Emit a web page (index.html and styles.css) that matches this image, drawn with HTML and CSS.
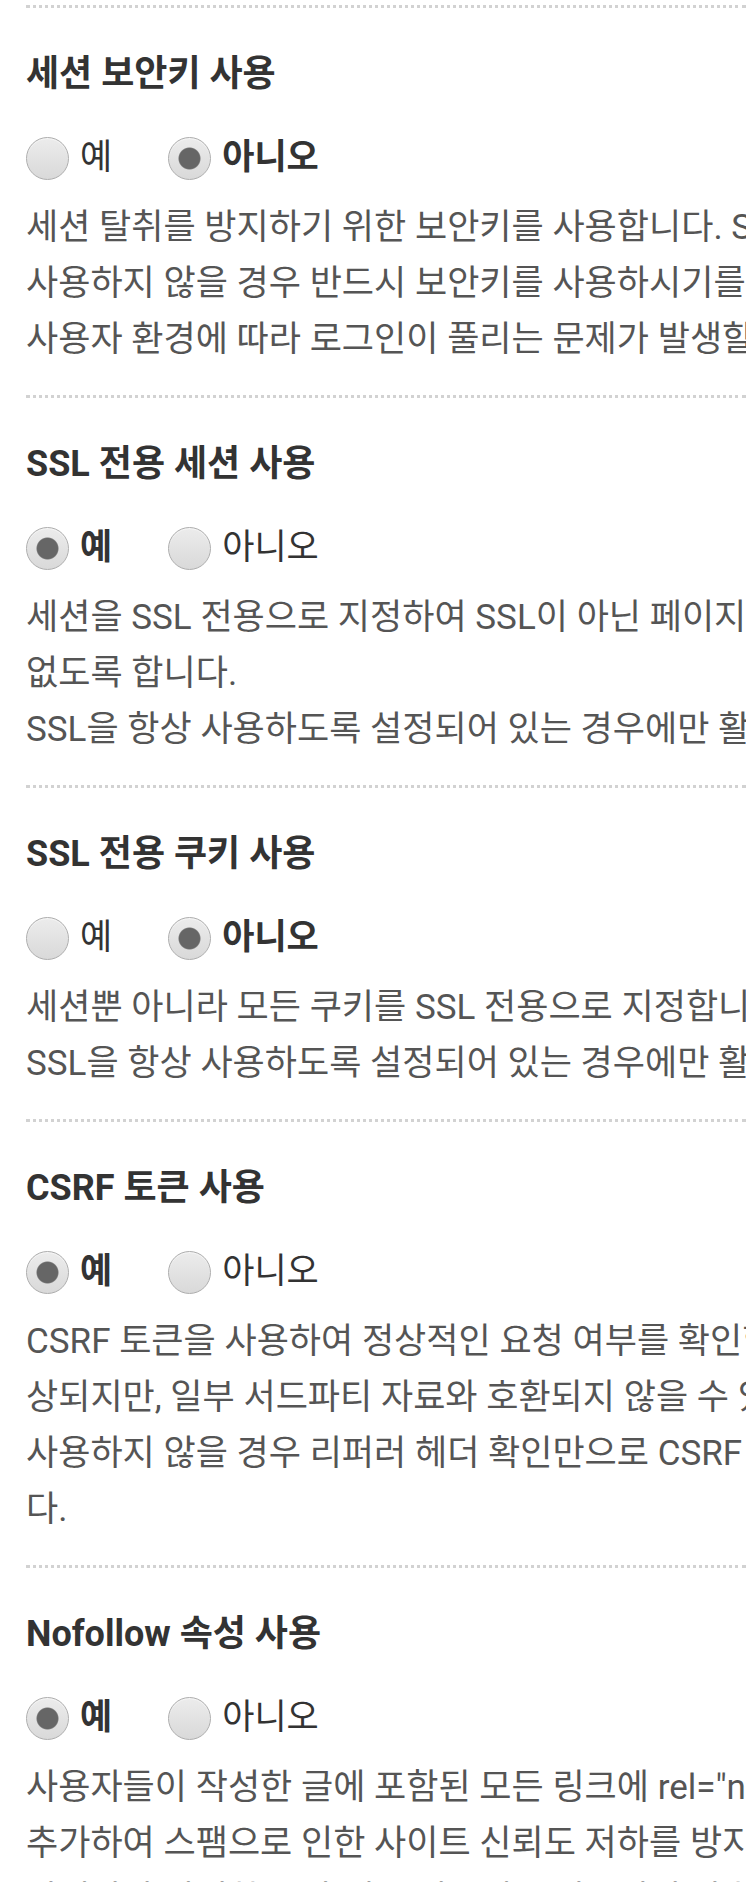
FILE: index.html
```html
<!DOCTYPE html>
<html lang="ko">
<head>
<meta charset="utf-8">
<title>보안 설정</title>
<link rel="stylesheet" href="styles.css">
</head>
<body>
<div class="settings">
  <section class="setting">
    <h3 class="setting-title">세션 보안키 사용</h3>
    <div class="options">
      <label class="opt"><input type="radio" name="use_session_keys" value="Y"><span>예</span></label>
      <label class="opt is-checked"><input type="radio" name="use_session_keys" value="N" checked><span>아니오</span></label>
    </div>
    <p class="desc">세션 탈취를 방지하기 위한 보안키를 사용합니다. SSL을<br>사용하지 않을 경우 반드시 보안키를 사용하시기를 권장합니다. 단, 일부<br>사용자 환경에 따라 로그인이 풀리는 문제가 발생할 수 있습니다.</p>
  </section>
  <section class="setting">
    <h3 class="setting-title">SSL 전용 세션 사용</h3>
    <div class="options">
      <label class="opt is-checked"><input type="radio" name="use_session_ssl" value="Y" checked><span>예</span></label>
      <label class="opt"><input type="radio" name="use_session_ssl" value="N"><span>아니오</span></label>
    </div>
    <p class="desc">세션을 SSL 전용으로 지정하여 SSL이 아닌 페이지에서는 세션에 접근할 수<br>없도록 합니다.<br>SSL을 항상 사용하도록 설정되어 있는 경우에만 활성화할 수 있습니다.</p>
  </section>
  <section class="setting">
    <h3 class="setting-title">SSL 전용 쿠키 사용</h3>
    <div class="options">
      <label class="opt"><input type="radio" name="use_cookies_ssl" value="Y"><span>예</span></label>
      <label class="opt is-checked"><input type="radio" name="use_cookies_ssl" value="N" checked><span>아니오</span></label>
    </div>
    <p class="desc">세션뿐 아니라 모든 쿠키를 SSL 전용으로 지정합니다.<br>SSL을 항상 사용하도록 설정되어 있는 경우에만 활성화할 수 있습니다.</p>
  </section>
  <section class="setting">
    <h3 class="setting-title">CSRF 토큰 사용</h3>
    <div class="options">
      <label class="opt is-checked"><input type="radio" name="check_csrf_token" value="Y" checked><span>예</span></label>
      <label class="opt"><input type="radio" name="check_csrf_token" value="N"><span>아니오</span></label>
    </div>
    <p class="desc">CSRF 토큰을 사용하여 정상적인 요청 여부를 확인합니다. 보안이 향<br>상되지만, 일부 서드파티 자료와 호환되지 않을 수 있습니다.<br>사용하지 않을 경우 리퍼러 헤더 확인만으로 CSRF 공격을 방어합니<br>다.</p>
  </section>
  <section class="setting">
    <h3 class="setting-title">Nofollow 속성 사용</h3>
    <div class="options">
      <label class="opt is-checked"><input type="radio" name="use_nofollow" value="Y" checked><span>예</span></label>
      <label class="opt"><input type="radio" name="use_nofollow" value="N"><span>아니오</span></label>
    </div>
    <p class="desc">사용자들이 작성한 글에 포함된 모든 링크에 rel="nofollow" 속성을<br>추가하여 스팸으로 인한 사이트 신뢰도 저하를 방지합니다.<br>관리자가 작성한 글과 내부 링크에는 적용되지 않습니다.</p>
  </section>
</div>
</body>
</html>
```

FILE: styles.css
```css
html, body {
  margin: 0;
  padding: 0;
  overflow: hidden;
  background: #fff;
}

body {
  font-family: "Roboto", "Noto Sans CJK KR", sans-serif;
  color: #333;
}

.settings {
  padding: 5px 0 0 26px;
}

.setting {
  border-top: 3px dotted #d2d2d2;
  padding: 38px 0 27px;
}

.setting-title {
  margin: 0;
  font-size: 36px;
  font-weight: 700;
  line-height: 56px;
  color: #333;
}

.options {
  display: flex;
  align-items: center;
  gap: 56px;
  margin-top: 28px;
  height: 56px;
}

.opt {
  display: flex;
  align-items: center;
  gap: 11px;
  font-size: 35px;
  line-height: 56px;
  color: #333;
}

.opt.is-checked {
  font-weight: 700;
}

.opt input {
  appearance: none;
  -webkit-appearance: none;
  margin: 0;
  width: 43px;
  height: 43px;
  border-radius: 50%;
  border: 1px solid #adadad;
  background: linear-gradient(#ececec, #d9d9d9);
  box-shadow: inset 0 1px 1px rgba(255, 255, 255, 0.6);
  flex: none;
}

.opt input:checked {
  background:
    radial-gradient(circle, #666 0 10px, #777 10.5px, transparent 11.5px),
    linear-gradient(#ececec, #d9d9d9);
}

.desc {
  margin: 14px 0 0;
  font-size: 35px;
  line-height: 56px;
  color: #555;
  white-space: nowrap;
}
```
